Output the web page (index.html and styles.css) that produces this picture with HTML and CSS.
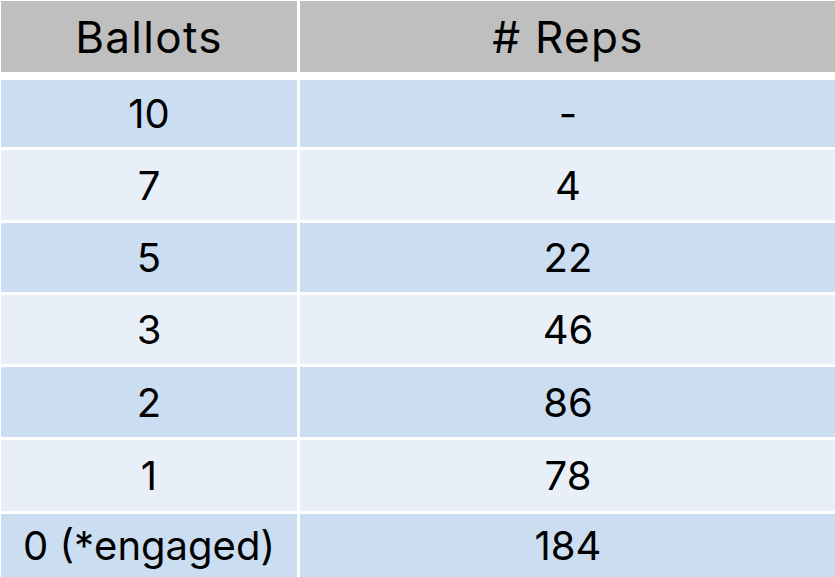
FILE: index.html
```html
<!DOCTYPE html>
<html>
<head>
<meta charset="utf-8">
<link rel="stylesheet" href="styles.css">
</head>
<body>
<div class="table">
  <div class="cell head">Ballots</div>
  <div class="cell head"># Reps</div>
  <div class="cell dark">10</div>
  <div class="cell dark">-</div>
  <div class="cell light">7</div>
  <div class="cell light">4</div>
  <div class="cell dark">5</div>
  <div class="cell dark">22</div>
  <div class="cell light">3</div>
  <div class="cell light">46</div>
  <div class="cell dark">2</div>
  <div class="cell dark">86</div>
  <div class="cell light">1</div>
  <div class="cell light">78</div>
  <div class="cell dark">0 (*engaged)</div>
  <div class="cell dark">184</div>
</div>
</body>
</html>
```
FILE: styles.css
```css
html, body {
  margin: 0;
  padding: 0;
  background: #ffffff;
  overflow: hidden;
}
.table {
  display: grid;
  grid-template-columns: 296px 536px;
  grid-template-rows: 76px 67px 70px 69px 69px 70px 71px 63px;
  column-gap: 3px;
  row-gap: 3px;
  padding: 1px 0 0 1px;
  font-family: Inter, "Liberation Sans", sans-serif;
  font-size: 40px;
  color: #000;
}
.cell {
  display: flex;
  align-items: center;
  justify-content: center;
}
.head {
  background: #bfbfbf;
  font-size: 44px;
  letter-spacing: 1.3px;
  height: 71px;
  align-self: start;
}
.dark { background: #cbddf1; }
.light { background: #e8eff8; }
```
